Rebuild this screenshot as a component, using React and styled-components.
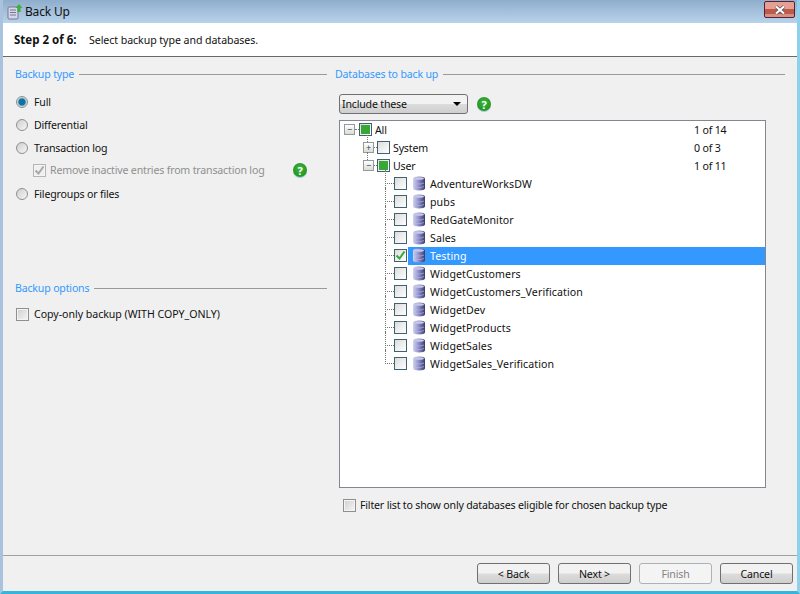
import styled, { createGlobalStyle } from 'styled-components';

const GlobalStyle = createGlobalStyle`
  html, body {
    margin: 0;
    padding: 0;
    background: #f0f0f0;
  }
  * {
    box-sizing: border-box;
  }
`;

const systemRows = [
  { name: 'AdventureWorksDW' },
  { name: 'pubs' },
  { name: 'RedGateMonitor' },
  { name: 'Sales' },
  { name: 'Testing', checked: true, selected: true },
  { name: 'WidgetCustomers' },
  { name: 'WidgetCustomers_Verification' },
  { name: 'WidgetDev' },
  { name: 'WidgetProducts' },
  { name: 'WidgetSales' },
  { name: 'WidgetSales_Verification' },
];

function DbIcon () {
  return (
    <svg width='14' height='15' viewBox='0 0 14 15'>
      <defs>
        <linearGradient id='db' x1='0' x2='1' y1='0' y2='0'>
          <stop offset='0' stopColor='#d4d4f0' />
          <stop offset='0.4' stopColor='#9a9ad4' />
          <stop offset='0.8' stopColor='#5a5a94' />
          <stop offset='1' stopColor='#3c3c5e' />
        </linearGradient>
      </defs>
      <path d='M1 2.500C1 1.400 3.500.5 7 .5s6 .9 6 2v10c0 1.100-2.500 2-6 2s-6-.9-6-2z' fill='url(#db)' />
      <ellipse cx='7' cy='2.500' rx='5' ry='1.300' fill='#c6c6e8' />
      <path d='M2 7c1.200.7 3 1 5 1s3.800-.3 5-1M2 10.500c1.200.7 3 1 5 1s3.800-.3 5-1' fill='none' stroke='#b4b4de' strokeWidth='.7' />
    </svg>
  );
}

function CheckMark ({ color }) {
  return (
    <svg width='11' height='11' viewBox='0 0 11 11'>
      <path d='M1.500 5.500l3 3 5-7' fill='none' stroke={color} strokeWidth='2' />
    </svg>
  );
}

function TreeCheck ({ state }) {
  return (
    <TreeBox>
      {state === 'partial' && <Partial />}
      {state === 'checked' && <CheckMark color='#3aa53a' />}
    </TreeBox>
  );
}

export default function App () {
  return (
    <>
      <GlobalStyle />
      <Window>
        <TitleBar>
          <svg width='16' height='17' viewBox='0 0 16 17'>
            <rect x='1' y='4' width='10' height='12' rx='1' fill='#d6d6ea' stroke='#77778f' />
            <path d='M3 7h6M3 9.500h6M3 12h6' stroke='#77778f' />
            <path d='M12 1l3.500 4h-2v4h-3V5h-2z' fill='#3fae3f' />
          </svg>
          <TitleText>Back Up</TitleText>
          <CloseButton>
            <svg width='14' height='10' viewBox='0 0 14 10'>
              <path d='M3 1.500l8 7M11 1.500l-8 7' stroke='#4b4b55' strokeWidth='3.400' />
              <path d='M3 1.500l8 7M11 1.500l-8 7' stroke='#fff' strokeWidth='2.200' />
            </svg>
          </CloseButton>
        </TitleBar>
        <StepHeader>
          <StepNumber>Step 2 of 6:</StepNumber>
          <StepText>Select backup type and databases.</StepText>
        </StepHeader>
        <Content>
          <LeftColumn>
            <SectionTitle>Backup type</SectionTitle>
            <RadioList>
              <OptionRow>
                <Radio $on />
                <span>Full</span>
              </OptionRow>
              <OptionRow>
                <Radio />
                <span>Differential</span>
              </OptionRow>
              <OptionRow>
                <Radio />
                <span>Transaction log</span>
              </OptionRow>
              <SubOption>
                <DisabledBox><CheckMark color='#a8a8a8' /></DisabledBox>
                <span>Remove inactive entries from transaction log</span>
                <SubHelp>?</SubHelp>
              </SubOption>
              <OptionRow>
                <Radio />
                <span>Filegroups or files</span>
              </OptionRow>
            </RadioList>
            <OptionsTitle>Backup options</OptionsTitle>
            <OptionRow>
              <PlainBox />
              <CopyLabel>Copy-only backup (WITH COPY_ONLY)</CopyLabel>
            </OptionRow>
          </LeftColumn>
          <RightColumn>
            <SectionTitle>Databases to back up</SectionTitle>
            <SelectRow>
              <Select>
                <span>Include these</span>
                <Arrow />
              </Select>
              <Help>?</Help>
            </SelectRow>
            <Tree>
              <TreeRow>
                <Expander>−</Expander>
                <Dash $w={4} />
                <TreeCheck state='partial' />
                <NodeText>All</NodeText>
                <Count>1 of 14</Count>
              </TreeRow>
              <TreeRow $indent={19}>
                <VLine $left={23} $top={-6} $h={15} />
                <Expander>+</Expander>
                <Dash $w={3} />
                <TreeCheck />
                <NodeText>System</NodeText>
                <Count>0 of 3</Count>
              </TreeRow>
              <TreeRow $indent={19}>
                <VLine $left={23} $top={-5} $h={10} />
                <Expander>−</Expander>
                <Dash $w={3} />
                <TreeCheck state='partial' />
                <NodeText>User</NodeText>
                <Count>1 of 11</Count>
              </TreeRow>
              {systemRows.map((db, i) => (
                <TreeRow key={db.name} $indent={41}>
                  <VLine $left={41} $top={-5} $h={i === systemRows.length - 1 ? 14 : 18} />
                  <Dash $w={9} />
                  <TreeCheck state={db.checked ? 'checked' : undefined} />
                  <DbLabel $selected={db.selected}>
                    <DbIcon />
                    <span>{db.name}</span>
                  </DbLabel>
                </TreeRow>
              ))}
            </Tree>
            <FilterRow>
              <PlainBox />
              <span>Filter list to show only databases eligible for chosen backup type</span>
            </FilterRow>
          </RightColumn>
        </Content>
        <Footer>
          <Button>&lt; Back</Button>
          <Button>Next &gt;</Button>
          <Button disabled>Finish</Button>
          <Button>Cancel</Button>
        </Footer>
      </Window>
    </>
  );
}

const Window = styled.div`
  width: 800px;
  height: 594px;
  display: flex;
  flex-direction: column;
  overflow: hidden;
  background: #f0f0f0;
  border-left: 3px solid #a9c3de;
  border-right: 3px solid #8fd0ea;
  border-bottom: 3px solid #35b4dc;
  font-family: "Noto Sans", sans-serif;
  font-size: 10.6px;
  letter-spacing: -0.18px;
  color: #111;
`;
const TitleBar = styled.div`
  height: 23px;
  margin: 0 -3px;
  padding: 0 5px 0 7px;
  display: flex;
  align-items: center;
  flex-shrink: 0;
  background: linear-gradient(#8fadcc, #b8d3eb);
`;
const TitleText = styled.span`
  margin-left: 2px;
  font-size: 12px;
  color: #111;
`;
const CloseButton = styled.div`
  margin-left: auto;
  margin-top: -4px;
  width: 31px;
  height: 17px;
  display: flex;
  align-items: center;
  justify-content: center;
  border: 1px solid #5a2035;
  border-radius: 2px;
  background: linear-gradient(#e5a091 0 46%, #bd5a4c 46% 78%, #d89080 78%);
`;
const StepHeader = styled.div`
  height: 34px;
  padding-left: 11px;
  display: flex;
  align-items: center;
  flex-shrink: 0;
  background: #fff;
  border-bottom: 1px solid #696969;
`;
const StepNumber = styled.b`
  width: 75px;
  font-size: 11.5px;
  font-weight: bold;
  letter-spacing: 0;
`;
const StepText = styled.span`
  letter-spacing: -0.06px;
`;
const Content = styled.div`
  flex: 1;
  display: flex;
  min-height: 0;
  padding: 10px 12px 0;
`;
const LeftColumn = styled.div`
  width: 312px;
  display: flex;
  flex-direction: column;
`;
const RightColumn = styled.div`
  width: 450px;
  margin-left: 8px;
  display: flex;
  flex-direction: column;
`;
const SectionTitle = styled.div`
  height: 13px;
  display: flex;
  align-items: center;
  gap: 5px;
  color: #3399ff;
  &::after {
    content: '';
    flex: 1;
    height: 1px;
    margin-top: 2px;
    background: #999;
  }
`;
const OptionsTitle = styled(SectionTitle)`
  margin-top: 80px;
  margin-bottom: 13px;
`;
const RadioList = styled.div`
  margin-top: 15px;
  display: flex;
  flex-direction: column;
  gap: 9px;
`;
const OptionRow = styled.div`
  height: 14px;
  display: flex;
  align-items: center;
  gap: 6px;
  margin-left: 1px;
`;
const CopyLabel = styled.span`
  letter-spacing: -0.03px;
`;
const SubOption = styled.div`
  height: 14px;
  margin: -1px 0 1px;
  padding: 0 20px 0 18px;
  display: flex;
  align-items: center;
  gap: 4px;
  color: #8f8f8f;
`;
const Radio = styled.span`
  width: 12px;
  height: 12px;
  flex-shrink: 0;
  border-radius: 50%;
  border: 1px solid #8e8f8f;
  background: ${props => props.$on
    ? 'radial-gradient(circle, #1b6f9c 0 3px, #7cc4e2 4px, #e8e8e8 5px)'
    : 'linear-gradient(135deg, #cfcfcf, #f6f6f6)'};
`;
const PlainBox = styled.span`
  width: 13px;
  height: 13px;
  flex-shrink: 0;
  margin-right: -1px;
  border: 1px solid #8e8f8f;
  box-shadow: inset 0 0 0 1px #f4f4f4;
  background: linear-gradient(135deg, #cfcfcf, #f6f6f6);
`;
const DisabledBox = styled(PlainBox)`
  display: flex;
  align-items: center;
  justify-content: center;
  margin-right: 0;
  border-color: #b5b5b5;
  background: #f0f0f0;
`;
const Help = styled.span`
  width: 14px;
  height: 14px;
  display: flex;
  align-items: center;
  justify-content: center;
  border-radius: 50%;
  background: radial-gradient(circle at 50% 40%, #3fb53f, #158a15);
  box-shadow: 0 1px 0 #9fc8d8;
  color: #fff;
  font-size: 11px;
  font-weight: bold;
`;
const SubHelp = styled(Help)`
  margin-left: auto;
`;
const SelectRow = styled.div`
  margin-top: 14px;
  padding-left: 4px;
  display: flex;
  align-items: center;
  gap: 9px;
`;
const Select = styled.div`
  width: 129px;
  height: 20px;
  padding: 0 4px 0 2px;
  display: flex;
  align-items: center;
  justify-content: space-between;
  border: 1px solid #707070;
  border-radius: 3px;
  background: linear-gradient(#f2f2f2 0 48%, #dcdcdc 52%, #cfcfcf);
`;
const Arrow = styled.span`
  width: 0;
  height: 0;
  margin-right: 2px;
  border-left: 4px solid transparent;
  border-right: 4px solid transparent;
  border-top: 4px solid #000;
`;
const Tree = styled.div`
  width: 427px;
  height: 368px;
  margin-top: 6px;
  margin-left: 4px;
  border: 1px solid #828790;
  background: #fff;
`;
const TreeRow = styled.div`
  position: relative;
  height: 18px;
  padding-left: ${props => (props.$indent || 0) + 4}px;
  padding-bottom: 1px;
  display: flex;
  align-items: center;
`;
const Expander = styled.span`
  width: 11px;
  height: 11px;
  display: flex;
  align-items: center;
  justify-content: center;
  flex-shrink: 0;
  position: relative;
  border: 1px solid #919b9c;
  background: linear-gradient(#fff, #dcdcd0);
  color: #1c3f7a;
  font-size: 9px;
  line-height: 1;
`;
const Dash = styled.span`
  width: ${props => props.$w}px;
  flex-shrink: 0;
  border-top: 1px dotted #777;
`;
const VLine = styled.span`
  position: absolute;
  left: ${props => props.$left + 4}px;
  top: ${props => props.$top}px;
  height: ${props => props.$h}px;
  border-left: 1px dotted #777;
`;
const TreeBox = styled.span`
  width: 13px;
  height: 13px;
  display: flex;
  align-items: center;
  justify-content: center;
  flex-shrink: 0;
  border: 1px solid #3f6170;
  background: linear-gradient(135deg, #dcdcdc, #fff);
`;
const Partial = styled.span`
  width: 9px;
  height: 9px;
  background: #35a835;
`;
const NodeText = styled.span`
  margin-left: 3px;
`;
const Count = styled.span`
  position: absolute;
  left: 354px;
`;
const DbLabel = styled.div`
  flex: 1;
  height: 18px;
  margin: 0 0 -1px 1px;
  padding: 0 0 1px 4px;
  display: flex;
  align-items: center;
  gap: 4px;
  letter-spacing: 0.1px;
  background: ${props => props.$selected ? '#3399ff' : 'transparent'};
  color: ${props => props.$selected ? '#fff' : '#111'};
`;
const FilterRow = styled.div`
  margin-top: 10px;
  margin-left: 8px;
  height: 14px;
  display: flex;
  align-items: center;
  gap: 5px;
`;
const Footer = styled.div`
  height: 36px;
  padding: 7px 4px 0 0;
  flex-shrink: 0;
  display: flex;
  justify-content: flex-end;
  gap: 8px;
  border-top: 1px solid #a0a0a0;
`;
const Button = styled.button`
  width: 73px;
  height: 21px;
  padding: 0;
  border: 1px solid #707070;
  border-radius: 3px;
  background: linear-gradient(#f2f2f2 0 48%, #dcdcdc 52%, #cfcfcf);
  font: inherit;
  letter-spacing: inherit;
  color: #111;
  &:disabled {
    border-color: #adb2b5;
    background: #f4f4f4;
    color: #838383;
  }
`;
